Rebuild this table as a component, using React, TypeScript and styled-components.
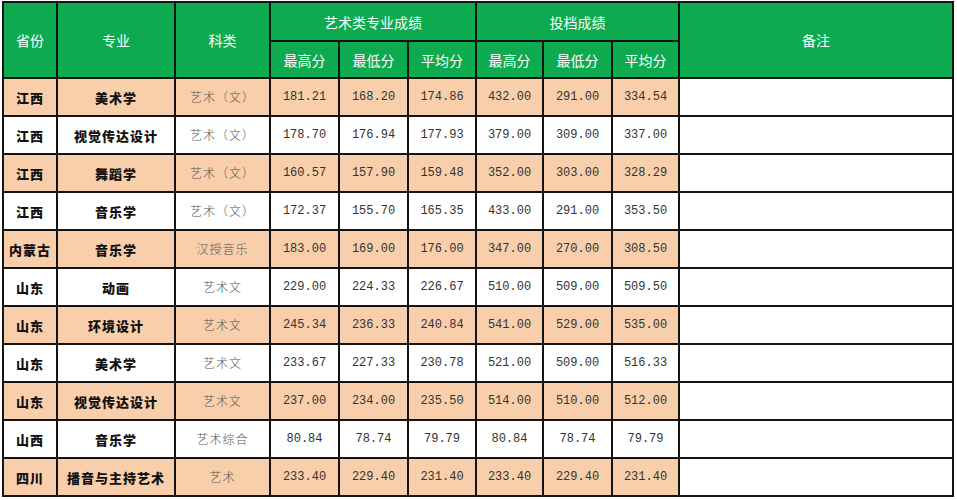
import React from "react";
import styled, { createGlobalStyle } from "styled-components";

const Global = createGlobalStyle`
  html, body { margin: 0; padding: 0; background: #ffffff; }
  body { font-family: "Noto Sans CJK SC", "Noto Sans", sans-serif; }
`;

const Page = styled.div`
  padding: 1px 0 0 2px;
  width: 957px;
  height: 500px;
  box-sizing: border-box;
  overflow: hidden;
`;

const Table = styled.table`
  border-collapse: collapse;
  table-layout: fixed;
  width: 952px;
`;

const HeadRow = styled.tr<{ $h: number }>`
  height: ${(p) => p.$h}px;
`;

const HeadCell = styled.th`
  border: 2px solid #141414;
  background: #0eaa4f;
  color: #ffffff;
  font-family: "Noto Sans CJK SC", sans-serif;
  font-weight: 400;
  font-size: 14px;
  text-align: center;
  vertical-align: middle;
  padding: 0;
  line-height: 1;
`;

const Row = styled.tr`
  height: 38px;
`;

const Cell = styled.td<{ $peach: boolean }>`
  border: 2px solid #141414;
  background: ${(p) => (p.$peach ? "#f9cfab" : "#ffffff")};
  text-align: center;
  vertical-align: middle;
  padding: 0;
  line-height: 1;
  white-space: nowrap;
`;

const BoldCell = styled(Cell)`
  font-family: "Noto Sans CJK SC", sans-serif;
  font-weight: 900;
  font-size: 13px;
  letter-spacing: 1px;
  color: #111;
`;

const KindCell = styled(Cell)`
  font-family: "Noto Sans CJK SC", sans-serif;
  font-weight: 300;
  font-size: 12px;
  letter-spacing: 1px;
  color: #555;
`;

const NumCell = styled(Cell)`
  font-family: "Liberation Mono", "DejaVu Sans Mono", monospace;
  font-size: 12px;
  color: #333;
`;

const NoteCell = styled.td`
  border: 2px solid #141414;
  background: #ffffff;
  padding: 0;
`;

const widths = [54, 118, 95, 69, 69, 68, 67, 69, 67, 274];

type R = [string, string, string, string[]];
const rows: R[] = [
  ["江西", "美术学", "艺术（文）", ["181.21", "168.20", "174.86", "432.00", "291.00", "334.54"]],
  ["江西", "视觉传达设计", "艺术（文）", ["178.70", "176.94", "177.93", "379.00", "309.00", "337.00"]],
  ["江西", "舞蹈学", "艺术（文）", ["160.57", "157.90", "159.48", "352.00", "303.00", "328.29"]],
  ["江西", "音乐学", "艺术（文）", ["172.37", "155.70", "165.35", "433.00", "291.00", "353.50"]],
  ["内蒙古", "音乐学", "汉授音乐", ["183.00", "169.00", "176.00", "347.00", "270.00", "308.50"]],
  ["山东", "动画", "艺术文", ["229.00", "224.33", "226.67", "510.00", "509.00", "509.50"]],
  ["山东", "环境设计", "艺术文", ["245.34", "236.33", "240.84", "541.00", "529.00", "535.00"]],
  ["山东", "美术学", "艺术文", ["233.67", "227.33", "230.78", "521.00", "509.00", "516.33"]],
  ["山东", "视觉传达设计", "艺术文", ["237.00", "234.00", "235.50", "514.00", "510.00", "512.00"]],
  ["山西", "音乐学", "艺术综合", ["80.84", "78.74", "79.79", "80.84", "78.74", "79.79"]],
  ["四川", "播音与主持艺术", "艺术", ["233.40", "229.40", "231.40", "233.40", "229.40", "231.40"]],
];

const subs = ["最高分", "最低分", "平均分", "最高分", "最低分", "平均分"];

export default function App() {
  return (
    <Page>
      <Global />
      <Table>
        <colgroup>
          {widths.map((w, i) => (
            <col key={i} style={{ width: w }} />
          ))}
        </colgroup>
        <thead>
          <HeadRow $h={39}>
            <HeadCell rowSpan={2}>省份</HeadCell>
            <HeadCell rowSpan={2}>专业</HeadCell>
            <HeadCell rowSpan={2}>科类</HeadCell>
            <HeadCell colSpan={3}>艺术类专业成绩</HeadCell>
            <HeadCell colSpan={3}>投档成绩</HeadCell>
            <HeadCell rowSpan={2}>备注</HeadCell>
          </HeadRow>
          <HeadRow $h={37}>
            {subs.map((s, i) => (
              <HeadCell key={i}>{s}</HeadCell>
            ))}
          </HeadRow>
        </thead>
        <tbody>
          {rows.map((r, i) => {
            const peach = i % 2 === 0;
            return (
              <Row key={i}>
                <BoldCell $peach={peach}>{r[0]}</BoldCell>
                <BoldCell $peach={peach}>{r[1]}</BoldCell>
                <KindCell $peach={peach}>{r[2]}</KindCell>
                {r[3].map((n, j) => (
                  <NumCell key={j} $peach={peach}>
                    {n}
                  </NumCell>
                ))}
                <NoteCell />
              </Row>
            );
          })}
        </tbody>
      </Table>
    </Page>
  );
}
